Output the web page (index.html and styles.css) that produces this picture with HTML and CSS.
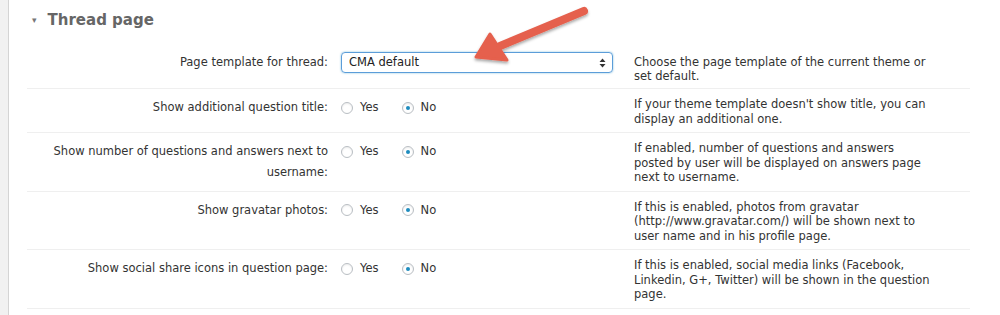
FILE: index.html
```html
<!DOCTYPE html>
<html>
<head>
<meta charset="utf-8">
<link rel="stylesheet" href="styles.css">
</head>
<body>
<div class="page">
  <div class="sidebar"></div>
  <div class="main">
    <h2 class="section-title"><span class="caret">&#9662;</span>Thread page</h2>
    <div class="table">
      <div class="row first">
        <div class="label">Page template for thread:</div>
        <div class="ctrl">
          <div class="select"><span>CMA default</span>
            <svg class="updown" width="7" height="10" viewBox="0 0 7 10"><path d="M3.5 0.5 L6.5 4 L0.5 4 Z M3.5 9.5 L6.5 6 L0.5 6 Z" fill="#333"/></svg>
          </div>
        </div>
        <div class="desc">Choose the page template of the current theme or set default.</div>
      </div>
      <div class="row">
        <div class="label">Show additional question title:</div>
        <div class="ctrl"><span class="radio"></span><span class="opt">Yes</span><span class="radio on"></span><span class="opt">No</span></div>
        <div class="desc">If your theme template doesn't show title, you can display an additional one.</div>
      </div>
      <div class="row">
        <div class="label">Show number of questions and answers next to username:</div>
        <div class="ctrl"><span class="radio"></span><span class="opt">Yes</span><span class="radio on"></span><span class="opt">No</span></div>
        <div class="desc">If enabled, number of questions and answers posted by user will be displayed on answers page next to username.</div>
      </div>
      <div class="row">
        <div class="label">Show gravatar photos:</div>
        <div class="ctrl"><span class="radio"></span><span class="opt">Yes</span><span class="radio on"></span><span class="opt">No</span></div>
        <div class="desc">If this is enabled, photos from gravatar (http://www.gravatar.com/) will be shown next to user name and in his profile page.</div>
      </div>
      <div class="row">
        <div class="label">Show social share icons in question page:</div>
        <div class="ctrl"><span class="radio"></span><span class="opt">Yes</span><span class="radio on"></span><span class="opt">No</span></div>
        <div class="desc">If this is enabled, social media links (Facebook, Linkedin, G+, Twitter) will be shown in the question page.</div>
      </div>
    </div>
  </div>
  <svg class="arrow" width="1000" height="100" viewBox="0 0 1000 100">
    <defs>
      <filter id="sh" x="-20%" y="-20%" width="140%" height="160%">
        <feDropShadow dx="0" dy="2" stdDeviation="1.5" flood-color="#000" flood-opacity="0.35"/>
      </filter>
    </defs>
    <g filter="url(#sh)" fill="#e5604d">
      <line x1="584" y1="11" x2="500" y2="46" stroke="#e5604d" stroke-width="8" stroke-linecap="round"/>
      <path d="M476 57 L490 34 L507 60 Z" stroke="#e5604d" stroke-width="3" stroke-linejoin="round"/>
    </g>
  </svg>
</div>
</body>
</html>
```

FILE: styles.css
```css
* { box-sizing: border-box; }
html, body { margin: 0; padding: 0; background: #fff; }
body {
  font-family: "DejaVu Sans", Verdana, sans-serif;
  font-size: 11.5px;
  color: #333;
  width: 1000px;
  height: 315px;
  overflow: hidden;
}
.page {
  position: relative;
  display: flex;
  height: 315px;
}
.sidebar {
  width: 9px;
  flex: none;
  background: #f1f1f1;
  border-right: 1px solid #d4d4d4;
}
.main {
  flex: 1;
  padding-left: 18px;
}
.section-title {
  margin: 0;
  height: 43.5px;
  padding-top: 10px;
  font-size: 15px;
  line-height: 20px;
  font-weight: bold;
  color: #666;
  display: flex;
  align-items: flex-start;
}
.caret {
  font-size: 9px;
  color: #777;
  margin-left: 5px;
  margin-right: 11px;
  line-height: 20px;
  font-weight: normal;
}
.table { width: 943px; }
.row {
  display: grid;
  grid-template-columns: 313px 294px 336px;
  border-bottom: 1px solid #efefef;
}
.label {
  text-align: right;
  padding: 8px 12px 7px 0;
  line-height: 21px;
}
.ctrl {
  padding: 8px 0 7px 1px;
  line-height: 21px;
  display: flex;
  align-items: flex-start;
}
.desc {
  padding: 8px 34px 6px 0;
  line-height: 14.5px;
}
.row.first .desc { padding-top: 11px; padding-bottom: 4.5px; }
.select {
  margin-top: 0.5px;
  width: 272px;
  height: 21px;
  border: 1px solid #5b9dd9;
  border-radius: 4px;
  box-shadow: 0 0 2px rgba(30,140,190,0.6);
  display: flex;
  align-items: center;
  justify-content: space-between;
  padding: 0 6px 0 7px;
  line-height: 19px;
  color: #222;
}
.updown { display: block; }
.radio {
  width: 12px;
  height: 12px;
  margin-top: 4.5px;
  border: 1px solid #b9bec3;
  border-radius: 50%;
  box-shadow: inset 0 1px 2px rgba(0,0,0,0.08);
  display: flex;
  align-items: center;
  justify-content: center;
  flex: none;
}
.radio.on::after {
  content: "";
  width: 4px;
  height: 4px;
  border-radius: 50%;
  background: #1e8cbe;
}
.opt {
  margin-left: 7px;
  margin-right: 23px;
  color: #333;
}
.arrow {
  position: absolute;
  left: 0;
  top: 0;
  pointer-events: none;
}
```
